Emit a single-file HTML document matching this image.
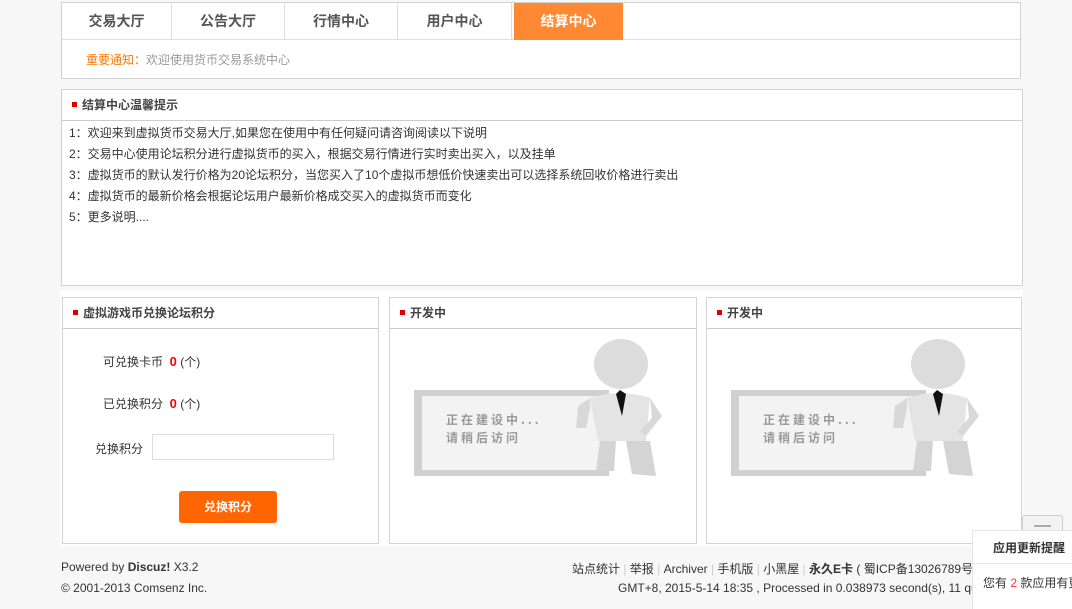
<!DOCTYPE html>
<html><head><meta charset="utf-8"><style>
*{margin:0;padding:0;box-sizing:border-box}
body{width:1072px;height:609px;background:#f7f7f7;font-family:"Liberation Sans","Noto Sans CJK SC",sans-serif;font-size:12px;color:#333;position:relative;overflow:hidden}
.abs{position:absolute}
.box{position:absolute;background:#fff;border:1px solid #d3d3d3}
.tab{position:absolute;top:0;height:37px;line-height:37px;text-align:center;font-size:14px;font-weight:bold;color:#555;border-right:1px solid #ddd}
.hd{height:31px;line-height:31px;border-bottom:1px solid #ccc;padding-left:10px;font-weight:bold;color:#444;font-size:12px}
.hd i{display:inline-block;width:5px;height:5px;background:#d00;margin-right:5px;vertical-align:middle;position:relative;top:-1px}
.lines{padding-top:2px}
.lines div{height:21px;line-height:21px;padding-left:7px;color:#333}
.red{color:#f00;font-weight:bold}
</style></head><body>
<div class="abs" style="left:60px;top:290px;width:963px;height:256px;background:#fff"></div>
<div class="box" style="left:61px;top:2px;width:960px;height:77px">
 <div style="height:37px;border-bottom:1px solid #ddd;position:relative">
  <div class="tab" style="left:0;width:110px">交易大厅</div>
  <div class="tab" style="left:110px;width:113px">公告大厅</div>
  <div class="tab" style="left:223px;width:113px">行情中心</div>
  <div class="tab" style="left:336px;width:114px">用户中心</div>
  <div class="tab" style="left:452px;width:109px;background:#ff8833;color:#fff;border:none">结算中心</div>
 </div>
 <div style="padding-left:24px;line-height:40px;color:#999">
  <span style="color:#ff7700">重要通知：</span>欢迎使用货币交易系统中心</div>
</div>
<div class="box" style="left:61px;top:89px;width:962px;height:197px">
 <div class="hd"><i></i>结算中心温馨提示</div>
 <div class="lines">
  <div>1：欢迎来到虚拟货币交易大厅,如果您在使用中有任何疑问请咨询阅读以下说明</div>
  <div>2：交易中心使用论坛积分进行虚拟货币的买入，根据交易行情进行实时卖出买入，以及挂单</div>
  <div>3：虚拟货币的默认发行价格为20论坛积分，当您买入了10个虚拟币想低价快速卖出可以选择系统回收价格进行卖出</div>
  <div>4：虚拟货币的最新价格会根据论坛用户最新价格成交买入的虚拟货币而变化</div>
  <div>5：更多说明....</div>
 </div>
</div>
<div class="box" style="left:62px;top:297px;width:317px;height:247px">
 <div class="hd"><i></i>虚拟游戏币兑换论坛积分</div>
 <div class="abs" style="left:40px;top:55px;font-size:12px">可兑换卡币 &nbsp;<span class="red" style="font-size:13px">0</span> (个)</div>
 <div class="abs" style="left:40px;top:97px">已兑换积分 &nbsp;<span class="red" style="font-size:13px">0</span> (个)</div>
 <div class="abs" style="left:32px;top:142px">兑换积分</div>
 <div class="abs" style="left:89px;top:136px;width:182px;height:26px;border:1px solid #ddd"></div>
 <div class="abs" style="left:116px;top:193px;width:98px;height:32px;background:#ff6600;border-radius:3px;color:#fff;font-weight:bold;text-align:center;line-height:32px">兑换积分</div>
</div>
<div class="box" style="left:389px;top:297px;width:308px;height:247px"><div class="hd"><i></i>开发中</div>
 <svg class="abs" style="left:20px;top:38px" width="280" height="145" viewBox="0 0 280 145">
  <rect x="4" y="54" width="195" height="86" fill="#d0d0d0"/><rect x="12" y="60" width="180" height="74" fill="#f3f3f3"/>
  <text x="36" y="88" font-size="12" font-weight="bold" fill="#999" letter-spacing="3" font-family="Noto Sans CJK SC">正在建设中...</text>
  <text x="36" y="106" font-size="12" font-weight="bold" fill="#999" letter-spacing="3" font-family="Noto Sans CJK SC">请稍后访问</text>
  <ellipse cx="211" cy="28" rx="27" ry="25" fill="#dcdcdc"/>
  <path d="M180 62 Q210 52 240 62 L236 105 L188 105 Z" fill="#e4e4e4"/>
  <path d="M210 54 L206 58 L212 80 L216 58 Z" fill="#111"/>
  <path d="M180 62 L168 70 L166 92 L176 92 L180 72 Z" fill="#d8d8d8"/>
  <path d="M240 62 L252 80 L236 100 L230 95 L242 82 Z" fill="#d8d8d8"/>
  <path d="M190 105 L186 135 L204 135 L206 105 Z M216 105 L222 138 L246 140 L240 105 Z" fill="#d4d4d4"/>
 </svg>
</div>
<div class="box" style="left:706px;top:297px;width:316px;height:247px"><div class="hd"><i></i>开发中</div>
 <svg class="abs" style="left:20px;top:38px" width="280" height="145" viewBox="0 0 280 145">
  <rect x="4" y="54" width="195" height="86" fill="#d0d0d0"/><rect x="12" y="60" width="180" height="74" fill="#f3f3f3"/>
  <text x="36" y="88" font-size="12" font-weight="bold" fill="#999" letter-spacing="3" font-family="Noto Sans CJK SC">正在建设中...</text>
  <text x="36" y="106" font-size="12" font-weight="bold" fill="#999" letter-spacing="3" font-family="Noto Sans CJK SC">请稍后访问</text>
  <ellipse cx="211" cy="28" rx="27" ry="25" fill="#dcdcdc"/>
  <path d="M180 62 Q210 52 240 62 L236 105 L188 105 Z" fill="#e4e4e4"/>
  <path d="M210 54 L206 58 L212 80 L216 58 Z" fill="#111"/>
  <path d="M180 62 L168 70 L166 92 L176 92 L180 72 Z" fill="#d8d8d8"/>
  <path d="M240 62 L252 80 L236 100 L230 95 L242 82 Z" fill="#d8d8d8"/>
  <path d="M190 105 L186 135 L204 135 L206 105 Z M216 105 L222 138 L246 140 L240 105 Z" fill="#d4d4d4"/>
 </svg>
</div>
<div class="abs" style="left:61px;top:560px">Powered by <b>Discuz!</b> X3.2</div>
<div class="abs" style="left:61px;top:581px">© 2001-2013 Comsenz Inc.</div>
<div class="abs" style="left:572px;top:560px;white-space:nowrap">站点统计 <span style="color:#ccc">|</span> 举报 <span style="color:#ccc">|</span> Archiver <span style="color:#ccc">|</span> 手机版 <span style="color:#ccc">|</span> 小黑屋 <span style="color:#ccc">|</span> <b>永久E卡</b> ( 蜀ICP备13026789号 )</div>
<div class="abs" style="left:618px;top:581px;white-space:nowrap">GMT+8, 2015-5-14 18:35 , Processed in 0.038973 second(s), 11 queries</div>
<div class="abs" style="left:1022px;top:515px;width:41px;height:26px;background:#f3f3f3;border:1px solid #ccc;border-radius:3px"><div style="margin:9px auto 0;width:17px;height:2px;background:#aaa"></div></div>
<div class="abs" style="left:972px;top:530px;width:100px;height:79px;background:#fff;border-left:1px solid #e6e6e6;border-top:1px solid #e6e6e6">
 <div style="height:33px;line-height:35px;font-weight:bold;padding-left:20px;border-bottom:1px solid #e6e6e6">应用更新提醒</div>
 <div style="padding-left:10px;line-height:38px;white-space:nowrap">您有 <span style="color:#f33">2</span> 款应用有更新</div>
</div>
</body></html>
